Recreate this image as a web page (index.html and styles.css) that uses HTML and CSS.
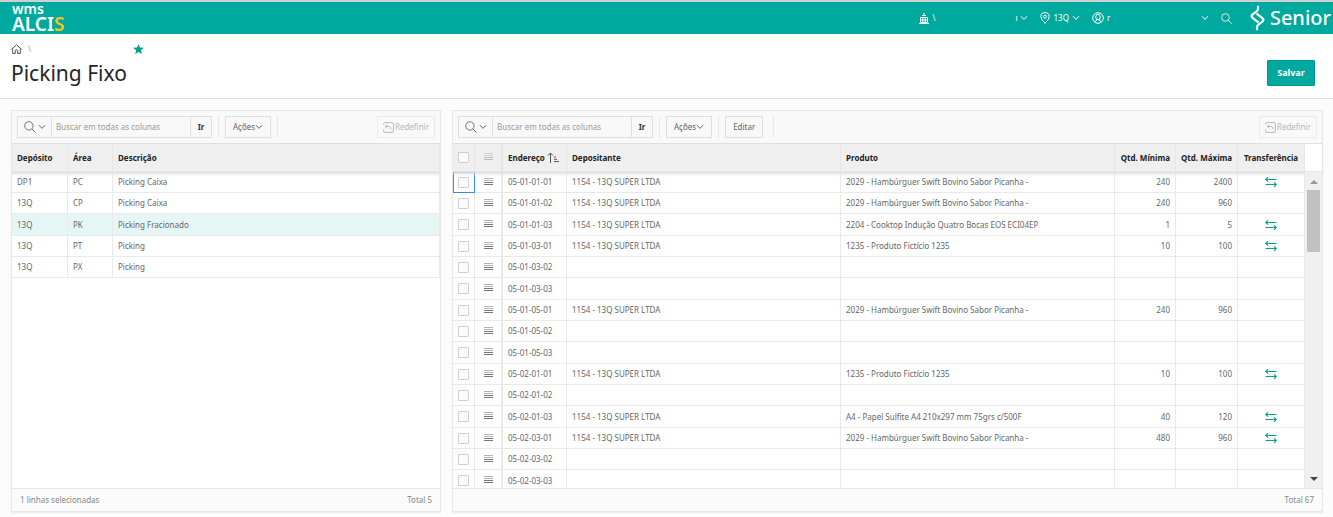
FILE: index.html
```html
<!DOCTYPE html>
<html lang="pt-BR">
<head>
<meta charset="utf-8">
<title>Picking Fixo</title>
<link rel="stylesheet" href="styles.css">
</head>
<body>
<svg class="defs" aria-hidden="true">
  <symbol id="chev" viewBox="0 0 8 6"><path d="M1 1.2 4 4.4 7 1.2" fill="none" stroke="currentColor"/></symbol>
  <symbol id="search" viewBox="0 0 12 12"><circle cx="4.9" cy="4.9" r="4.2" fill="none" stroke="currentColor" stroke-width=".9"/><path d="M8 8 11.6 11.6" stroke="currentColor"/></symbol>
  <symbol id="reset" viewBox="0 0 11 11"><path d="M4 .6H9.2Q10.4.6 10.4 1.8V9.2Q10.4 10.4 9.2 10.4H1.8Q.6 10.4.6 9.2V7.5M.6 2.5V1.8Q.6.6 1.8.6H4" fill="none" stroke="currentColor"/><path d="M4.2 2.6 2.2 4.5 4.2 6.4M2.4 4.5H6.4Q8 4.5 8 7.4" fill="none" stroke="currentColor"/></symbol>
  <symbol id="menu" viewBox="0 0 9 9"><path d="M0 .5H9M0 2.5H9" stroke="currentColor" opacity=".55"/><path d="M0 4.5H9M0 6.5H9" stroke="currentColor"/></symbol>
  <symbol id="swap" viewBox="0 0 12 12"><path d="M.8 3.5H11.5M3 1.2.8 3.5 3 5.6" fill="none" stroke="currentColor" stroke-width="1.1"/><path d="M.5 8.5H11.2M9 6.4 11.2 8.5 9 10.8" fill="none" stroke="currentColor" stroke-width="1.1"/></symbol>
</svg>
<header class="topbar">
  <a class="brand" href="#"><span class="brand-top">wms</span><span class="brand-main">ALCI<span class="brand-s">S</span></span></a>
  <nav class="topnav">
    <button class="nav-btn nav-company"><svg width="10" height="11" viewBox="0 0 10 11"><path d="M5 0V2M3 2.5H7M1.5 4.5H8.5V9.5H1.5ZM0 10.4H10M3.8 4.5V9.5M6.2 4.5V9.5M1.5 7H8.5" fill="none" stroke="currentColor"/></svg><span>\</span><span class="push">ı</span><svg width="8" height="6"><use href="#chev"/></svg></button>
    <button class="nav-btn"><svg width="10" height="12" viewBox="0 0 10 12"><path d="M5 11.3Q.8 7 .8 4.6A4.2 4 0 0 1 9.2 4.6Q9.2 7 5 11.3Z" fill="none" stroke="currentColor"/><circle cx="5" cy="4.6" r="1.5" fill="none" stroke="currentColor"/></svg><span>13Q</span><svg width="8" height="6"><use href="#chev"/></svg></button>
    <button class="nav-btn nav-user"><svg width="12" height="12" viewBox="0 0 12 12"><circle cx="6" cy="6" r="5.3" fill="none" stroke="currentColor"/><ellipse cx="6" cy="5" rx="2.3" ry="2.8" fill="none" stroke="currentColor"/><path d="M2.4 9.8 4.8 8.2V7.2M9.6 9.8 7.2 8.2V7.2" fill="none" stroke="currentColor"/></svg><span>r</span><svg class="push" width="8" height="6"><use href="#chev"/></svg></button>
    <button class="nav-btn" aria-label="Pesquisar"><svg width="11" height="11" viewBox="0 0 12 12"><use href="#search"/></svg></button>
  </nav>
  <a class="senior" href="#"><svg width="15" height="26" viewBox="0 0 15 26"><path d="M8 .8V3.6Q8 5.4 6.4 6.6L2.6 9.4Q.6 11.2 2.6 13L8.4 17.4M7 25.2V22.4Q7 20.6 8.6 19.4L12.4 16.6Q14.4 14.8 12.4 13L6.6 8.6" fill="none" stroke="currentColor" stroke-width="2.2"/></svg><span>Senior</span></a>
</header>
<section class="titlebar">
  <div>
    <div class="crumbs"><a href="#" aria-label="Início"><svg width="11" height="10" viewBox="0 0 11 10"><path d="M.4 5.4 5.5.7 10.6 5.4M1.7 4.4V9.5H4.3V6.4Q5.5 5 6.7 6.4V9.5H9.3V4.4" fill="none" stroke="currentColor" stroke-width=".9"/></svg></a><span class="slash">\</span><svg class="star" width="11" height="10" viewBox="0 0 11 10"><path d="M5.5 0 6.9 3.5 11 3.8 7.8 6.2 8.9 10 5.5 7.9 2.1 10 3.2 6.2 0 3.8 4.1 3.5Z" fill="currentColor"/></svg></div>
    <h1>Picking Fixo</h1>
  </div>
  <button class="save">Salvar</button>
</section>
<main class="panels">
  <section class="panel">
    <div class="toolbar">
      <div class="searchbox">
        <button class="s-col" aria-label="Colunas"><svg width="12" height="12"><use href="#search"/></svg><svg width="8" height="6"><use href="#chev"/></svg></button>
        <input type="text" placeholder="Buscar em todas as colunas" aria-label="Buscar">
        <button class="s-go">Ir</button>
      </div>
      <i class="sep"></i>
      <button class="tbtn">Ações<svg width="8" height="6"><use href="#chev"/></svg></button>
      <i class="sep"></i>
      <button class="tbtn reset" disabled><svg width="11" height="11"><use href="#reset"/></svg>Redefinir</button>
    </div>
    <div class="gridbody">
      <div class="tablewrap">
      <table class="data areas">
        <colgroup><col class="c-dep"><col class="c-area"><col></colgroup>
        <thead><tr><th>Depósito</th><th>Área</th><th>Descrição</th></tr></thead>
        <tbody>
          <tr><td>DP1</td><td>PC</td><td>Picking Caixa</td></tr>
          <tr><td>13Q</td><td>CP</td><td>Picking Caixa</td></tr>
          <tr class="selected"><td>13Q</td><td>PK</td><td>Picking Fracionado</td></tr>
          <tr><td>13Q</td><td>PT</td><td>Picking</td></tr>
          <tr><td>13Q</td><td>PX</td><td>Picking</td></tr>
        </tbody>
      </table>
      </div>
    </div>
    <footer class="foot"><span>1 linhas selecionadas</span><span>Total 5</span></footer>
  </section>
  <section class="panel">
    <div class="toolbar">
      <div class="searchbox">
        <button class="s-col" aria-label="Colunas"><svg width="12" height="12"><use href="#search"/></svg><svg width="8" height="6"><use href="#chev"/></svg></button>
        <input type="text" placeholder="Buscar em todas as colunas" aria-label="Buscar">
        <button class="s-go">Ir</button>
      </div>
      <i class="sep"></i>
      <button class="tbtn">Ações<svg width="8" height="6"><use href="#chev"/></svg></button>
      <i class="sep"></i>
      <button class="tbtn">Editar</button>
      <i class="sep wide"></i>
      <button class="tbtn reset" disabled><svg width="11" height="11"><use href="#reset"/></svg>Redefinir</button>
    </div>
    <div class="gridbody">
      <div class="tablewrap">
      <table class="data picks">
        <colgroup><col class="c-check"><col class="c-menu"><col class="c-addr"><col><col><col class="c-min"><col class="c-max"><col class="c-tr"></colgroup>
        <thead><tr><th class="mid"><input type="checkbox" aria-label="Selecionar tudo"></th><th class="mid menu"><svg width="9" height="9"><use href="#menu"/></svg></th><th>Endereço<svg class="sort" width="12" height="11" viewBox="0 0 12 11"><path d="M3.5 11V1M1 3.5 3.5 1 6 3.5M7 5H9M7 7.3H10M7 9.6H12" fill="none" stroke="currentColor"/></svg></th><th>Depositante</th><th>Produto</th><th class="num">Qtd. Mínima</th><th class="num">Qtd. Máxima</th><th class="mid">Transferência</th></tr></thead>
        <tbody id="rows"></tbody>
      </table>
      </div>
      <div class="scroll"><div class="scroll-head"></div><div class="track"><span class="up"></span><span class="thumb"></span><span class="down"></span></div></div>
    </div>
    <footer class="foot"><span></span><span>Total 67</span></footer>
  </section>
</main>
<script src="rows.js"></script>
</body>
</html>
```
FILE: styles.css
```css
* { box-sizing: border-box; }
body {
  margin: 0; height: 100vh; display: flex; flex-direction: column; overflow: hidden;
  background: #fcfcfc; color: #666; font: 8px/12px "Noto Sans", "Open Sans", sans-serif;
}
button, input { font: inherit; color: inherit; margin: 0; }
button { background: none; border: 0; padding: 0; display: inline-flex; align-items: center; }
svg { flex: none; }
a { color: inherit; text-decoration: none; }
.defs { position: absolute; width: 0; height: 0; }

.topbar {
  flex: none; height: 34px; border-top: 2px solid #d0d0d0; background: #00a99d; color: #fff;
  display: flex; align-items: center; padding: 0 2px 0 12px;
}
.brand { display: flex; flex-direction: column; }
.brand-top { font-size: 14px; line-height: 12px; font-weight: 600; }
.brand-main { font-size: 19px; line-height: 18px; font-weight: 600; }
.brand-s { color: #f9c513; }
.topnav { margin-left: auto; display: flex; align-items: center; gap: 12px; }
.nav-btn { gap: 3px; }
.nav-company { width: 109px; }
.nav-user { width: 117px; }
.push { margin-left: auto; }
.senior { display: flex; align-items: center; gap: 5px; margin-left: 18px; font: 500 20px/26px "Noto Sans", sans-serif; }

.titlebar {
  flex: none; height: 65px; background: #fff; border-bottom: 1px solid #e0e0e0;
  display: flex; align-items: center; justify-content: space-between; padding: 0 18px 0 11px;
}
.crumbs { display: flex; align-items: center; height: 12px; gap: 6px; color: #444; }
.crumbs a { display: flex; }
.slash { color: #aaa; }
.star { margin-left: 96px; color: #00a08f; }
h1 { margin: 4px 0 2px; font: 400 21px/28px "Noto Sans", sans-serif; color: #262626; }
.save {
  width: 48px; height: 26px; margin-top: 14px; justify-content: center; border: 1px solid #00988d; border-radius: 1px;
  background: #00a99d; color: #fff; font-size: 9px; font-weight: 700;
}

.panels {
  flex: 1; min-height: 0; display: grid; grid-template-columns: 430fr 871fr; gap: 11px; padding: 11px 10px 5px 11px;
}
.panel {
  min-width: 0; min-height: 0; display: flex; flex-direction: column; background: #fff;
  border: 1px solid #e8e8e8; box-shadow: 0 1px 1px #eee;
}
.toolbar {
  flex: none; height: 33px; display: flex; align-items: center; gap: 6px; padding: 0 5px; background: #f9f9f9;
  border-bottom: 1px solid #dfdfdf;
}
.searchbox { display: flex; width: 195px; height: 22px; border: 1px solid #dfdfdf; }
.s-col { width: 33px; justify-content: center; gap: 2px; color: #666; }
.searchbox input { flex: 1; min-width: 0; border: solid #dfdfdf; border-width: 0 1px; background: none; padding: 0 4px; outline: 0; }
.searchbox input::placeholder { color: #999; opacity: 1; }
.s-go { width: 20px; justify-content: center; font-weight: 700; color: #333; }
.sep { width: 1px; height: 22px; background: #e8e8e8; }
.sep.wide { margin-left: 4px; }
.tbtn { height: 22px; padding: 0 7px; border: 1px solid #dfdfdf; }
.reset { margin-left: auto; padding: 0 5px; gap: 1px; border-color: #ebebeb; color: #b8b8b8; }

.gridbody { flex: 1; min-height: 0; display: flex; }
.tablewrap { flex: 1; min-width: 0; overflow: hidden; }
.data { width: 100%; table-layout: fixed; border-collapse: separate; border-spacing: 0; }
.c-dep { width: 56px; }
.c-area { width: 45px; }
.c-check { width: 22px; }
.c-menu { width: 28px; }
.c-addr { width: 64px; }
.c-min { width: 61px; }
.c-max { width: 62px; }
.c-tr { width: 67px; }
th, td { padding: 0 5px; white-space: nowrap; overflow: hidden; text-align: left; border: solid #e9e9e9; border-width: 0 1px 1px 0; }
th { position: relative; height: 28px; background: #efefef; border-color: #e6e6e6; color: #222; font-weight: 700; }
thead { position: relative; box-shadow: 0 2px 3px #ddd; }
td { height: 21px; line-height: 12px; }
tbody tr:nth-child(3n) td { height: 22px; }
.selected td { background: #e6f6f5; }
.num { text-align: right; }
.mid { text-align: center; padding: 0; }
.mid svg { display: block; margin: 0 auto; }
.menu { border-right-width: 2px; color: #777; }
th.menu { color: #bbb; }
td .swap { color: #00a08f; }
.sort { vertical-align: -2px; margin-left: 2px; color: #555; }
.data input {
  appearance: none; display: block; width: 11px; height: 11px; margin: 0 auto; border: 1px solid #cfcfcf; border-radius: 1px; background: #fafafa;
}
.focused { outline: 1px solid #3c8bd9; outline-offset: -1px; }

.scroll { width: 17px; display: flex; flex-direction: column; }
.scroll-head { height: 28px; border-bottom: 1px solid #e6e6e6; box-shadow: 0 2px 3px #ddd; }
.track { flex: 1; background: #f0f0f0; display: flex; flex-direction: column; align-items: center; padding: 8px 0 7px; }
.up, .down { border: 4px solid transparent; border-top-width: 0; border-bottom: 4px solid #999; }
.down { margin-top: auto; border-top: 4px solid #444; border-bottom-width: 0; }
.thumb { width: 13px; height: 62px; margin-top: 6px; background: #c1c1c1; }
.foot {
  flex: none; height: 23px; display: flex; align-items: center; justify-content: space-between; padding: 0 8px;
  background: #fbfbfb; border-top: 1px solid #e6e6e6; color: #888;
}
```
FILE: rows.js
```js
const owner = "1154 - 13Q SUPER LTDA";
const burger = "2029 - Hambúrguer Swift Bovino Sabor Picanha -";
const rows = [
  ["05-01-01-01", owner, burger, 240, 2400, true],
  ["05-01-01-02", owner, burger, 240, 960, false],
  ["05-01-01-03", owner, "2204 - Cooktop Indução Quatro Bocas EOS ECI04EP", 1, 5, true],
  ["05-01-03-01", owner, "1235 - Produto Fictício 1235", 10, 100, true],
  ["05-01-03-02"],
  ["05-01-03-03"],
  ["05-01-05-01", owner, burger, 240, 960, false],
  ["05-01-05-02"],
  ["05-01-05-03"],
  ["05-02-01-01", owner, "1235 - Produto Fictício 1235", 10, 100, true],
  ["05-02-01-02"],
  ["05-02-01-03", owner, "A4 - Papel Sulfite A4 210x297 mm 75grs c/500F", 40, 120, true],
  ["05-02-03-01", owner, burger, 480, 960, true],
  ["05-02-03-02"],
  ["05-02-03-03"]
];
document.getElementById("rows").innerHTML = rows.map(([addr, dep = "", prod = "", min = "", max = "", swap], i) => `
<tr><td class="mid${i === 0 ? " focused" : ""}"><input type="checkbox" aria-label="${addr}"></td>
<td class="mid menu"><svg width="9" height="9"><use href="#menu"/></svg></td>
<td>${addr}</td><td>${dep}</td><td>${prod}</td><td class="num">${min}</td><td class="num">${max}</td>
<td class="mid">${swap ? '<svg class="swap" width="12" height="12"><use href="#swap"/></svg>' : ""}</td></tr>`).join("");
```
